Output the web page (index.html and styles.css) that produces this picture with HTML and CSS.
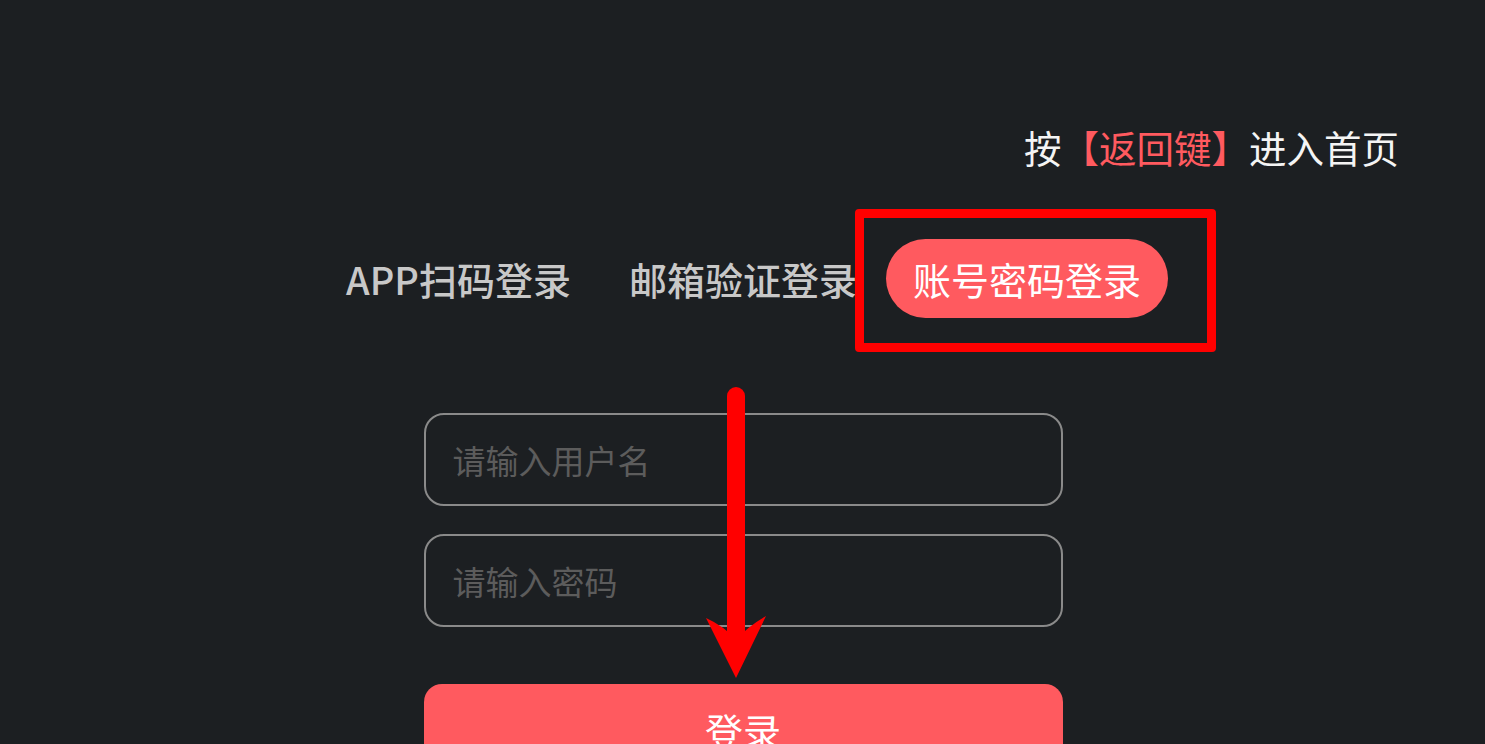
FILE: index.html
```html
<!DOCTYPE html>
<html lang="zh-CN">
<head>
    <meta charset="UTF-8">
    <title>登录</title>
    <link rel="stylesheet" href="styles.css">
</head>
<body>
<div id="page">
    <p class="hint">按<span class="key">【返回键】</span>进入首页</p>

    <ul class="tabs">
        <li>APP扫码登录</li>
        <li>邮箱验证登录</li>
        <li class="active">账号密码登录<span class="mark"></span></li>
    </ul>

    <div class="form">
        <input class="field" type="text" placeholder="请输入用户名">
        <input class="field" type="password" placeholder="请输入密码">
        <button class="submit">登录</button>
    </div>

    <svg class="arrow" width="1485" height="744" viewBox="0 0 1485 744">
        <line x1="736" y1="396" x2="736" y2="640" stroke="#ff0000" stroke-width="18" stroke-linecap="round"/>
        <path d="M706 618 Q724 626 736 640 Q748 626 766 616 L736 678 Z" fill="#ff0000"/>
    </svg>
</div>
</body>
</html>
```

FILE: styles.css
```css
*{
    margin: 0;
    padding: 0;
    box-sizing: border-box;
}
html,body{
    height: 100%;
    overflow: hidden;
}
body{
    background: #1c1f22;
    font-family: "Noto Sans CJK SC", "Noto Sans", sans-serif;
    color: #fff;
}
li{
    list-style: none;
}
#page{
    position: relative;
    height: 744px;
}
.hint{
    padding: 120px 86px 0 0;
    text-align: right;
    font-size: 37.5px;
    line-height: 54px;
    color: #f4f4f4;
}
.hint .key{
    color: #ff5a5f;
}
.tabs{
    display: flex;
    justify-content: center;
    margin-top: 65px;
}
.tabs li{
    height: 79px;
    line-height: 79px;
    padding: 0 29px;
    font-size: 38px;
    font-weight: 500;
    color: #c8c8c8;
}
.tabs li.active{
    position: relative;
    padding: 0 27px;
    border-radius: 40px;
    background: #ff5a5f;
    color: #fff;
    font-weight: 400;
}
/* 外框标注 */
.tabs .mark{
    position: absolute;
    left: -31px;
    top: -30px;
    right: -48px;
    bottom: -34px;
    border: 9px solid #ff0000;
    border-radius: 4px;
}
.form{
    width: 640px;
    margin: 95px auto 0;
    padding-left: 1px;
    display: flex;
    flex-direction: column;
}
.field{
    height: 93px;
    margin-bottom: 28px;
    padding-left: 27px;
    border: 2px solid #8a8a8a;
    border-radius: 20px;
    background: transparent;
    font-family: "Noto Sans CJK SC", "Noto Sans", sans-serif;
    font-size: 33px;
    color: #fff;
    outline: none;
}
.field::placeholder{
    color: #5c5c5c;
}
.field + .field{
    margin-bottom: 57px;
}
.submit{
    height: 93px;
    padding-bottom: 2px;
    border: none;
    border-radius: 18px;
    background: #ff5a5f;
    font-family: "Noto Sans CJK SC", "Noto Sans", sans-serif;
    font-size: 38px;
    color: #fff;
}
.arrow{
    position: absolute;
    left: 0;
    top: 0;
    pointer-events: none;
}
```
